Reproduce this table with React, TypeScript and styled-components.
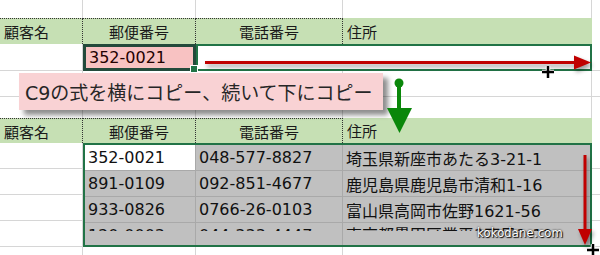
import * as React from 'react';
import styled, { createGlobalStyle } from 'styled-components';

const GlobalStyle = createGlobalStyle`
	html, body {
		margin: 0;
		padding: 0;
		background: #fff;
	}
	body {
		font-family: "DejaVu Sans", "Noto Sans CJK JP", sans-serif;
		overflow: hidden;
	}
`;

const COLUMNS = '83px 113px 147px 249px 1fr';

const Page = styled.div`
	position: relative;
	width: 600px;
	height: 255px;
	overflow: hidden;
`;

const Sheet = styled.div<{ $rows: string }>`
	display: grid;
	grid-template-columns: ${COLUMNS};
	grid-template-rows: ${(p) => p.$rows};
`;

const Cell = styled.div<{ $last?: boolean }>`
	box-sizing: border-box;
	display: flex;
	align-items: center;
	padding: 0 4px;
	border-right: ${(p) => (p.$last ? 'none' : '1px solid #d6d6d6')};
	border-bottom: 1px solid #d6d6d6;
	font-size: 16px;
	color: #111;
	white-space: nowrap;
	overflow: hidden;
`;

const BlankCell = styled(Cell)`
	border-bottom: none;
`;

const HeadCell = styled.div<{ $center?: boolean; $dotted?: boolean; $plain?: boolean }>`
	box-sizing: border-box;
	display: flex;
	align-items: center;
	justify-content: ${(p) => (p.$center ? 'center' : 'flex-start')};
	padding: 0 4px;
	background: ${(p) => (p.$plain ? '#fff' : '#c6e0b4')};
	border-top: ${(p) => (p.$dotted ? '1px dotted #333' : 'none')};
	border-right: ${(p) => (p.$dotted ? '1px dotted #333' : p.$plain ? 'none' : '1px solid #c6e0b4')};
	font-family: "Noto Sans CJK JP", sans-serif;
	font-size: 15px;
	color: #1a1a1a;
	white-space: nowrap;
`;

const ActiveCell = styled.div`
	position: relative;
	box-sizing: border-box;
	display: flex;
	align-items: center;
	padding: 0 3px;
	background: #f8c2c2;
	border: 3px solid #234a3b;
	font-size: 16px;
	color: #200;
`;

const FillHandle = styled.span`
	position: absolute;
	right: -5px;
	bottom: -5px;
	width: 6px;
	height: 6px;
	background: #217346;
	border: 1px solid #fff;
`;

const RowSelection = styled.div`
	grid-column: 3 / 5;
	box-sizing: border-box;
	border: 2px solid #217346;
	background: #fff;
`;

const BlockSelection = styled.div`
	grid-column: 2 / 5;
	grid-row: 2 / 6;
	box-sizing: border-box;
	border: 2px solid #217346;
	display: grid;
	grid-template-columns: 111px 147px 1fr;
	grid-template-rows: 26px 26px 26px 1fr;
	background: #c0c0c0;
`;

const DataCell = styled.div<{ $white?: boolean; $edge?: boolean }>`
	box-sizing: border-box;
	display: flex;
	align-items: center;
	padding: 0 3px;
	background: ${(p) => (p.$white ? '#fff' : '#c0c0c0')};
	border-right: ${(p) => (p.$edge ? 'none' : '1px solid #a9a9a9')};
	border-bottom: 1px solid #a9a9a9;
	font-size: 16px;
	color: #111;
	white-space: nowrap;
	overflow: hidden;
`;

const LastDataCell = styled(DataCell)`
	align-items: flex-start;
	border-bottom: none;
`;

const Clip = styled.div`
	height: 8px;
	overflow: hidden;
	line-height: 26px;
`;

const Callout = styled.div`
	position: absolute;
	left: 19px;
	top: 73px;
	width: 364px;
	height: 37px;
	box-sizing: border-box;
	padding-left: 6px;
	display: flex;
	align-items: center;
	background: #f9d2d4;
	box-shadow: 5px 5px 5px rgba(0, 0, 0, 0.45);
	font-size: 19px;
	color: #262626;
	white-space: nowrap;
`;

const Watermark = styled.div`
	position: absolute;
	left: 477px;
	top: 226px;
	font-family: "DejaVu Sans", sans-serif;
	font-size: 11.5px;
	color: #fff;
	text-shadow: 0 0 2px #000, 1px 1px 1px #000;
	letter-spacing: 0.2px;
`;

const Overlay = styled.svg`
	position: absolute;
	left: 0;
	top: 0;
	pointer-events: none;
`;

const Shadowed = styled.g`
	filter: drop-shadow(2px 3px 2px rgba(0, 0, 0, 0.4));
`;

const Cross = ({ x, y }: { x: number; y: number }) => (
	<g>
		<path d={`M${x - 6} ${y}H${x + 6}M${x} ${y - 6}V${y + 6}`} stroke="#fff" strokeWidth={4.5} />
		<path d={`M${x - 6} ${y}H${x + 6}M${x} ${y - 6}V${y + 6}`} stroke="#000" strokeWidth={2.5} />
	</g>
);

const rows = [
	['352-0021', '048-577-8827', '埼玉県新座市あたる3-21-1'],
	['891-0109', '092-851-4677', '鹿児島県鹿児島市清和1-16'],
	['933-0826', '0766-26-0103', '富山県高岡市佐野1621-56'],
];

const lastRow = ['120-0003', '044-333-4447', '東京都墨田区業平3丁目1-10'];

const App = (): React.ReactElement => {
	return (
		<Page>
			<GlobalStyle />
			<Sheet $rows="18px 26px 27px 26px 21px">
				<BlankCell />
				<BlankCell />
				<BlankCell />
				<BlankCell />
				<BlankCell $last />

				<HeadCell $dotted>顧客名</HeadCell>
				<HeadCell $dotted $center>郵便番号</HeadCell>
				<HeadCell $dotted $center>電話番号</HeadCell>
				<HeadCell>住所</HeadCell>
				<HeadCell $plain />

				<Cell />
				<ActiveCell>
					352-0021
					<FillHandle />
				</ActiveCell>
				<RowSelection />
				<Cell $last />

				<Cell />
				<Cell />
				<Cell />
				<Cell />
				<Cell $last />

				<BlankCell />
				<BlankCell />
				<BlankCell />
				<BlankCell />
				<BlankCell $last />
			</Sheet>

			<Sheet $rows="25px 26px 26px 26px 26px 8px">
				<HeadCell $dotted>顧客名</HeadCell>
				<HeadCell $dotted $center>郵便番号</HeadCell>
				<HeadCell $dotted $center>電話番号</HeadCell>
				<HeadCell>住所</HeadCell>
				<HeadCell $plain />

				<Cell />
				<BlockSelection>
					{rows.map((r, i) => (
						<React.Fragment key={i}>
							<DataCell $white={i === 0}>{r[0]}</DataCell>
							<DataCell>{r[1]}</DataCell>
							<DataCell $edge>{r[2]}</DataCell>
						</React.Fragment>
					))}
					<LastDataCell>
						<Clip>{lastRow[0]}</Clip>
					</LastDataCell>
					<LastDataCell>
						<Clip>{lastRow[1]}</Clip>
					</LastDataCell>
					<LastDataCell $edge>
						<Clip>{lastRow[2]}</Clip>
					</LastDataCell>
				</BlockSelection>
				<Cell $last />
				<Cell />
				<Cell $last />
				<Cell />
				<Cell $last />
				<Cell />
				<Cell $last />

				<BlankCell />
				<BlankCell />
				<BlankCell />
				<BlankCell />
				<BlankCell $last />
			</Sheet>

			<Callout>C9の式を横にコピー、続いて下にコピー</Callout>
			<Watermark>kokodane.com</Watermark>

			<Overlay width={600} height={255} viewBox="0 0 600 255">
				<Shadowed>
					<path d="M205 62.5H578" stroke="#c00000" strokeWidth={3} />
					<polygon points="574,55.5 591,62.5 574,69.5" fill="#c00000" />
					<path d="M585 155V232" stroke="#c00000" strokeWidth={3} />
					<polygon points="578,229 592,229 585,245" fill="#c00000" />
				</Shadowed>
				<circle cx={399} cy={83} r={4.5} fill="#0a870a" />
				<path d="M399 83V110" stroke="#0a870a" strokeWidth={4} />
				<polygon points="387,108 412,108 399.5,133" fill="#0a870a" />
				<Cross x={548} y={72} />
				<Cross x={593} y={250} />
			</Overlay>
		</Page>
	);
};

export default App;
